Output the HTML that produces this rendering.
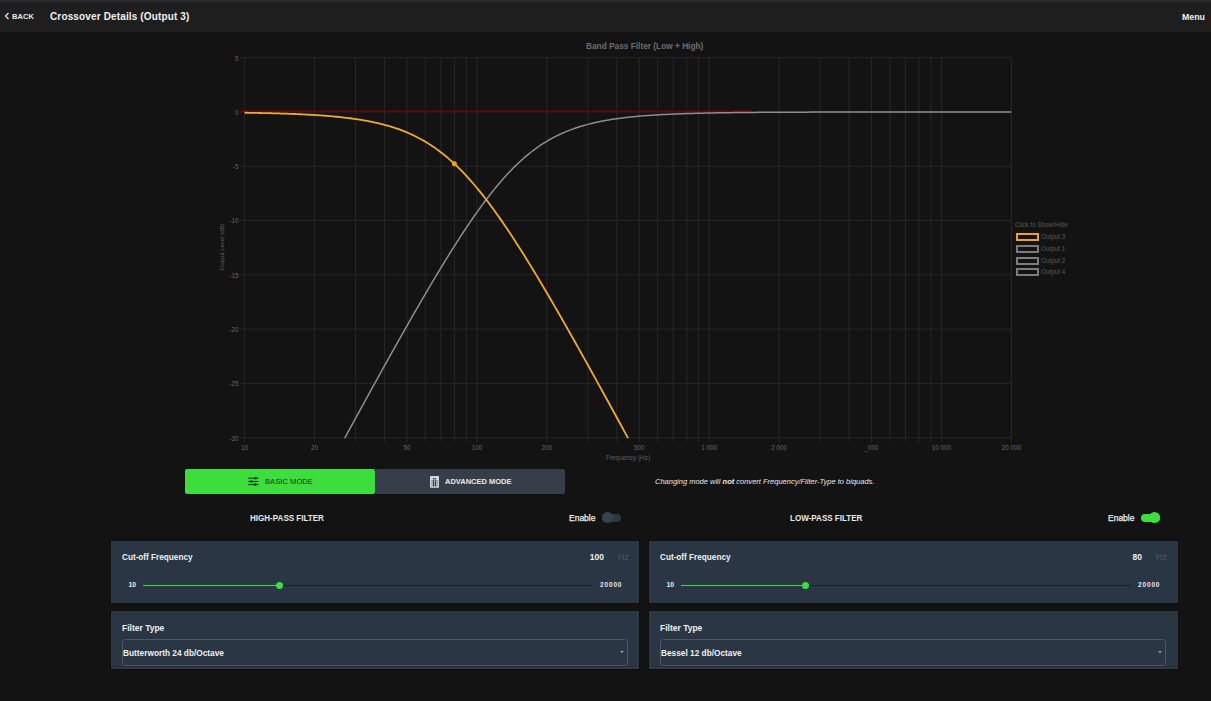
<!DOCTYPE html>
<html><head><meta charset="utf-8">
<style>
*{margin:0;padding:0;box-sizing:border-box}
html,body{width:1211px;height:701px;overflow:hidden;background:#131313;font-family:"Liberation Sans",sans-serif;position:relative}
.abs{position:absolute}
#topstrip{position:absolute;left:0;top:0;width:1211px;height:2px;background:#2b2b30}
#hdr{position:absolute;left:0;top:2px;width:1211px;height:30px;background:#1e1e1e}
.t{position:absolute;white-space:nowrap;line-height:1}
svg{position:absolute;left:0;top:0}
.yl{position:absolute;left:200px;width:38.5px;text-align:right;font-size:6.3px;line-height:8px;color:#676767}
.xl{position:absolute;top:443.7px;width:60px;text-align:center;font-size:6.3px;line-height:8px;color:#676767}
.card{position:absolute;background:#2a3644;box-shadow:0 0 0 1px rgba(8,11,16,0.55),inset 0 0 0 1px #2f3740}
.lg{position:absolute;left:1015.5px;width:23px;height:7.8px;border:2px solid #7c7c7c}
.lgt{position:absolute;left:1041px;font-size:6.3px;line-height:7px;color:#595959}
</style></head><body>
<div id="topstrip"></div>
<div id="hdr"></div>
<svg class="abs" style="left:4px;top:11.7px" width="6" height="8" viewBox="0 0 6 8"><path d="M4.5 1 L1.5 4 L4.5 7" fill="none" stroke="#e6e6e6" stroke-width="1.3"/></svg>
<div class="t" style="left:12px;top:13px;font-size:7.5px;font-weight:bold;color:#e8e8e8;letter-spacing:0.1px">BACK</div>
<div class="t" style="left:50px;top:11.5px;font-size:10px;font-weight:bold;color:#f0f0f0;letter-spacing:0.14px">Crossover Details (Output 3)</div>
<div class="t" style="left:1182px;top:13px;font-size:8.8px;font-weight:bold;color:#f0f0f0">Menu</div>

<div class="t" style="left:586px;top:41.8px;font-size:8.3px;font-weight:bold;color:#6e6e6e">Band Pass Filter (Low + High)</div>
<svg width="1211" height="470" viewBox="0 0 1211 470">
<line x1="244.60" y1="57.70" x2="244.60" y2="442" stroke="#272727" stroke-width="1"/>
<line x1="314.53" y1="57.70" x2="314.53" y2="442" stroke="#272727" stroke-width="1"/>
<line x1="355.44" y1="57.70" x2="355.44" y2="442" stroke="#272727" stroke-width="1"/>
<line x1="384.46" y1="57.70" x2="384.46" y2="442" stroke="#272727" stroke-width="1"/>
<line x1="406.97" y1="57.70" x2="406.97" y2="442" stroke="#272727" stroke-width="1"/>
<line x1="425.36" y1="57.70" x2="425.36" y2="442" stroke="#272727" stroke-width="1"/>
<line x1="440.92" y1="57.70" x2="440.92" y2="442" stroke="#272727" stroke-width="1"/>
<line x1="454.39" y1="57.70" x2="454.39" y2="442" stroke="#272727" stroke-width="1"/>
<line x1="466.27" y1="57.70" x2="466.27" y2="442" stroke="#272727" stroke-width="1"/>
<line x1="476.90" y1="57.70" x2="476.90" y2="442" stroke="#272727" stroke-width="1"/>
<line x1="546.83" y1="57.70" x2="546.83" y2="442" stroke="#272727" stroke-width="1"/>
<line x1="587.74" y1="57.70" x2="587.74" y2="442" stroke="#272727" stroke-width="1"/>
<line x1="616.76" y1="57.70" x2="616.76" y2="442" stroke="#272727" stroke-width="1"/>
<line x1="639.27" y1="57.70" x2="639.27" y2="442" stroke="#272727" stroke-width="1"/>
<line x1="657.66" y1="57.70" x2="657.66" y2="442" stroke="#272727" stroke-width="1"/>
<line x1="673.22" y1="57.70" x2="673.22" y2="442" stroke="#272727" stroke-width="1"/>
<line x1="686.69" y1="57.70" x2="686.69" y2="442" stroke="#272727" stroke-width="1"/>
<line x1="698.57" y1="57.70" x2="698.57" y2="442" stroke="#272727" stroke-width="1"/>
<line x1="709.20" y1="57.70" x2="709.20" y2="442" stroke="#272727" stroke-width="1"/>
<line x1="779.13" y1="57.70" x2="779.13" y2="442" stroke="#272727" stroke-width="1"/>
<line x1="820.04" y1="57.70" x2="820.04" y2="442" stroke="#272727" stroke-width="1"/>
<line x1="849.06" y1="57.70" x2="849.06" y2="442" stroke="#272727" stroke-width="1"/>
<line x1="871.57" y1="57.70" x2="871.57" y2="442" stroke="#272727" stroke-width="1"/>
<line x1="889.96" y1="57.70" x2="889.96" y2="442" stroke="#272727" stroke-width="1"/>
<line x1="905.52" y1="57.70" x2="905.52" y2="442" stroke="#272727" stroke-width="1"/>
<line x1="918.99" y1="57.70" x2="918.99" y2="442" stroke="#272727" stroke-width="1"/>
<line x1="930.87" y1="57.70" x2="930.87" y2="442" stroke="#272727" stroke-width="1"/>
<line x1="941.50" y1="57.70" x2="941.50" y2="442" stroke="#272727" stroke-width="1"/>
<line x1="1011.43" y1="57.70" x2="1011.43" y2="442" stroke="#272727" stroke-width="1"/>
<line x1="240" y1="57.70" x2="1011.8" y2="57.70" stroke="#272727" stroke-width="1"/>
<line x1="240" y1="111.99" x2="1011.8" y2="111.99" stroke="#272727" stroke-width="1"/>
<line x1="240" y1="166.27" x2="1011.8" y2="166.27" stroke="#272727" stroke-width="1"/>
<line x1="240" y1="220.56" x2="1011.8" y2="220.56" stroke="#272727" stroke-width="1"/>
<line x1="240" y1="274.84" x2="1011.8" y2="274.84" stroke="#272727" stroke-width="1"/>
<line x1="240" y1="329.13" x2="1011.8" y2="329.13" stroke="#272727" stroke-width="1"/>
<line x1="240" y1="383.41" x2="1011.8" y2="383.41" stroke="#272727" stroke-width="1"/>
<line x1="240" y1="437.70" x2="1011.8" y2="437.70" stroke="#272727" stroke-width="1"/>
<line x1="240" y1="111.1" x2="752" y2="111.1" stroke="#620606" stroke-width="1.7"/>
<defs><clipPath id="cp"><rect x="240" y="50" width="772" height="388.3"/></clipPath></defs>
<g clip-path="url(#cp)"><path d="M244.60,623.12 L246.52,619.56 L248.43,616.01 L250.35,612.45 L252.27,608.89 L254.19,605.33 L256.10,601.77 L258.02,598.22 L259.94,594.66 L261.85,591.10 L263.77,587.55 L265.69,583.99 L267.60,580.44 L269.52,576.88 L271.44,573.33 L273.36,569.78 L275.27,566.22 L277.19,562.67 L279.11,559.12 L281.02,555.57 L282.94,552.01 L284.86,548.46 L286.78,544.91 L288.69,541.37 L290.61,537.82 L292.53,534.27 L294.44,530.72 L296.36,527.17 L298.28,523.63 L300.20,520.08 L302.11,516.54 L304.03,513.00 L305.95,509.45 L307.86,505.91 L309.78,502.37 L311.70,498.83 L313.61,495.30 L315.53,491.76 L317.45,488.22 L319.37,484.69 L321.28,481.15 L323.20,477.62 L325.12,474.09 L327.03,470.56 L328.95,467.03 L330.87,463.51 L332.79,459.98 L334.70,456.46 L336.62,452.94 L338.54,449.42 L340.45,445.90 L342.37,442.38 L344.29,438.87 L346.20,435.35 L348.12,431.84 L350.04,428.34 L351.96,424.83 L353.87,421.33 L355.79,417.83 L357.71,414.33 L359.62,410.84 L361.54,407.34 L363.46,403.85 L365.38,400.37 L367.29,396.89 L369.21,393.41 L371.13,389.93 L373.04,386.46 L374.96,382.99 L376.88,379.52 L378.80,376.06 L380.71,372.61 L382.63,369.16 L384.55,365.71 L386.46,362.27 L388.38,358.83 L390.30,355.40 L392.21,351.98 L394.13,348.56 L396.05,345.14 L397.97,341.73 L399.88,338.33 L401.80,334.94 L403.72,331.55 L405.63,328.17 L407.55,324.80 L409.47,321.44 L411.39,318.09 L413.30,314.74 L415.22,311.40 L417.14,308.08 L419.05,304.76 L420.97,301.45 L422.89,298.16 L424.80,294.87 L426.72,291.60 L428.64,288.34 L430.56,285.10 L432.47,281.86 L434.39,278.64 L436.31,275.44 L438.22,272.25 L440.14,269.08 L442.06,265.92 L443.98,262.78 L445.89,259.66 L447.81,256.56 L449.73,253.48 L451.64,250.41 L453.56,247.37 L455.48,244.35 L457.40,241.35 L459.31,238.38 L461.23,235.43 L463.15,232.50 L465.06,229.61 L466.98,226.74 L468.90,223.89 L470.81,221.08 L472.73,218.29 L474.65,215.54 L476.57,212.82 L478.48,210.13 L480.40,207.47 L482.32,204.85 L484.23,202.27 L486.15,199.72 L488.07,197.21 L489.99,194.73 L491.90,192.30 L493.82,189.90 L495.74,187.55 L497.65,185.24 L499.57,182.97 L501.49,180.74 L503.40,178.56 L505.32,176.42 L507.24,174.33 L509.16,172.28 L511.07,170.27 L512.99,168.31 L514.91,166.40 L516.82,164.54 L518.74,162.72 L520.66,160.94 L522.58,159.22 L524.49,157.54 L526.41,155.90 L528.33,154.32 L530.24,152.77 L532.16,151.28 L534.08,149.82 L536.00,148.42 L537.91,147.05 L539.83,145.73 L541.75,144.45 L543.66,143.22 L545.58,142.02 L547.50,140.87 L549.41,139.76 L551.33,138.68 L553.25,137.64 L555.17,136.64 L557.08,135.67 L559.00,134.75 L560.92,133.85 L562.83,132.99 L564.75,132.16 L566.67,131.36 L568.59,130.59 L570.50,129.85 L572.42,129.14 L574.34,128.46 L576.25,127.80 L578.17,127.17 L580.09,126.57 L582.00,125.98 L583.92,125.42 L585.84,124.89 L587.76,124.37 L589.67,123.88 L591.59,123.41 L593.51,122.95 L595.42,122.51 L597.34,122.09 L599.26,121.69 L601.18,121.31 L603.09,120.93 L605.01,120.58 L606.93,120.24 L608.84,119.91 L610.76,119.60 L612.68,119.30 L614.60,119.01 L616.51,118.73 L618.43,118.46 L620.35,118.21 L622.26,117.96 L624.18,117.73 L626.10,117.50 L628.01,117.29 L629.93,117.08 L631.85,116.88 L633.77,116.69 L635.68,116.51 L637.60,116.33 L639.52,116.16 L641.43,116.00 L643.35,115.84 L645.27,115.69 L647.19,115.55 L649.10,115.41 L651.02,115.28 L652.94,115.15 L654.85,115.03 L656.77,114.91 L658.69,114.80 L660.60,114.69 L662.52,114.59 L664.44,114.49 L666.36,114.39 L668.27,114.30 L670.19,114.21 L672.11,114.13 L674.02,114.04 L675.94,113.96 L677.86,113.89 L679.78,113.82 L681.69,113.75 L683.61,113.68 L685.53,113.62 L687.44,113.55 L689.36,113.49 L691.28,113.44 L693.20,113.38 L695.11,113.33 L697.03,113.28 L698.95,113.23 L700.86,113.18 L702.78,113.14 L704.70,113.09 L706.61,113.05 L708.53,113.01 L710.45,112.97 L712.37,112.93 L714.28,112.90 L716.20,112.86 L718.12,112.83 L720.03,112.80 L721.95,112.77 L723.87,112.74 L725.79,112.71 L727.70,112.68 L729.62,112.66 L731.54,112.63 L733.45,112.61 L735.37,112.58 L737.29,112.56 L739.20,112.54 L741.12,112.52 L743.04,112.50 L744.96,112.48 L746.87,112.46 L748.79,112.44 L750.71,112.43 L752.62,112.41 L754.54,112.39 L756.46,112.38 L758.38,112.36 L760.29,112.35 L762.21,112.34 L764.13,112.32 L766.04,112.31 L767.96,112.30 L769.88,112.29 L771.80,112.28 L773.71,112.26 L775.63,112.25 L777.55,112.24 L779.46,112.23 L781.38,112.22 L783.30,112.22 L785.21,112.21 L787.13,112.20 L789.05,112.19 L790.97,112.18 L792.88,112.18 L794.80,112.17 L796.72,112.16 L798.63,112.16 L800.55,112.15 L802.47,112.14 L804.39,112.14 L806.30,112.13 L808.22,112.13 L810.14,112.12 L812.05,112.12 L813.97,112.11 L815.89,112.11 L817.80,112.10 L819.72,112.10 L821.64,112.09 L823.56,112.09 L825.47,112.09 L827.39,112.08 L829.31,112.08 L831.22,112.07 L833.14,112.07 L835.06,112.07 L836.98,112.06 L838.89,112.06 L840.81,112.06 L842.73,112.06 L844.64,112.05 L846.56,112.05 L848.48,112.05 L850.40,112.05 L852.31,112.04 L854.23,112.04 L856.15,112.04 L858.06,112.04 L859.98,112.04 L861.90,112.03 L863.81,112.03 L865.73,112.03 L867.65,112.03 L869.57,112.03 L871.48,112.03 L873.40,112.02 L875.32,112.02 L877.23,112.02 L879.15,112.02 L881.07,112.02 L882.99,112.02 L884.90,112.02 L886.82,112.02 L888.74,112.01 L890.65,112.01 L892.57,112.01 L894.49,112.01 L896.40,112.01 L898.32,112.01 L900.24,112.01 L902.16,112.01 L904.07,112.01 L905.99,112.01 L907.91,112.01 L909.82,112.00 L911.74,112.00 L913.66,112.00 L915.58,112.00 L917.49,112.00 L919.41,112.00 L921.33,112.00 L923.24,112.00 L925.16,112.00 L927.08,112.00 L929.00,112.00 L930.91,112.00 L932.83,112.00 L934.75,112.00 L936.66,112.00 L938.58,112.00 L940.50,112.00 L942.41,112.00 L944.33,112.00 L946.25,111.99 L948.17,111.99 L950.08,111.99 L952.00,111.99 L953.92,111.99 L955.83,111.99 L957.75,111.99 L959.67,111.99 L961.59,111.99 L963.50,111.99 L965.42,111.99 L967.34,111.99 L969.25,111.99 L971.17,111.99 L973.09,111.99 L975.00,111.99 L976.92,111.99 L978.84,111.99 L980.76,111.99 L982.67,111.99 L984.59,111.99 L986.51,111.99 L988.42,111.99 L990.34,111.99 L992.26,111.99 L994.18,111.99 L996.09,111.99 L998.01,111.99 L999.93,111.99 L1001.84,111.99 L1003.76,111.99 L1005.68,111.99 L1007.60,111.99 L1009.51,111.99 L1011.43,111.99" fill="none" stroke="#8e8e8e" stroke-width="1.5"/>
<path d="M244.60,112.73 L246.52,112.76 L248.43,112.79 L250.35,112.82 L252.27,112.85 L254.19,112.88 L256.10,112.92 L258.02,112.96 L259.94,112.99 L261.85,113.03 L263.77,113.08 L265.69,113.12 L267.60,113.16 L269.52,113.21 L271.44,113.26 L273.36,113.31 L275.27,113.36 L277.19,113.41 L279.11,113.47 L281.02,113.53 L282.94,113.59 L284.86,113.65 L286.78,113.71 L288.69,113.78 L290.61,113.85 L292.53,113.93 L294.44,114.00 L296.36,114.08 L298.28,114.17 L300.20,114.25 L302.11,114.34 L304.03,114.44 L305.95,114.53 L307.86,114.63 L309.78,114.74 L311.70,114.85 L313.61,114.96 L315.53,115.08 L317.45,115.20 L319.37,115.33 L321.28,115.46 L323.20,115.60 L325.12,115.75 L327.03,115.90 L328.95,116.05 L330.87,116.22 L332.79,116.39 L334.70,116.56 L336.62,116.75 L338.54,116.94 L340.45,117.14 L342.37,117.34 L344.29,117.56 L346.20,117.78 L348.12,118.02 L350.04,118.26 L351.96,118.51 L353.87,118.78 L355.79,119.05 L357.71,119.34 L359.62,119.64 L361.54,119.95 L363.46,120.27 L365.38,120.61 L367.29,120.96 L369.21,121.32 L371.13,121.70 L373.04,122.10 L374.96,122.51 L376.88,122.94 L378.80,123.38 L380.71,123.85 L382.63,124.33 L384.55,124.83 L386.46,125.35 L388.38,125.90 L390.30,126.47 L392.21,127.05 L394.13,127.67 L396.05,128.30 L397.97,128.97 L399.88,129.66 L401.80,130.37 L403.72,131.12 L405.63,131.89 L407.55,132.69 L409.47,133.52 L411.39,134.39 L413.30,135.28 L415.22,136.21 L417.14,137.18 L419.05,138.18 L420.97,139.21 L422.89,140.28 L424.80,141.39 L426.72,142.54 L428.64,143.73 L430.56,144.96 L432.47,146.22 L434.39,147.53 L436.31,148.88 L438.22,150.28 L440.14,151.72 L442.06,153.20 L443.98,154.72 L445.89,156.29 L447.81,157.91 L449.73,159.56 L451.64,161.27 L453.56,163.02 L455.48,164.81 L457.40,166.65 L459.31,168.54 L461.23,170.47 L463.15,172.45 L465.06,174.47 L466.98,176.53 L468.90,178.64 L470.81,180.79 L472.73,182.99 L474.65,185.23 L476.57,187.51 L478.48,189.83 L480.40,192.19 L482.32,194.59 L484.23,197.04 L486.15,199.52 L488.07,202.03 L489.99,204.59 L491.90,207.18 L493.82,209.80 L495.74,212.46 L497.65,215.15 L499.57,217.88 L501.49,220.63 L503.40,223.42 L505.32,226.23 L507.24,229.08 L509.16,231.95 L511.07,234.85 L512.99,237.77 L514.91,240.72 L516.82,243.70 L518.74,246.70 L520.66,249.72 L522.58,252.76 L524.49,255.82 L526.41,258.91 L528.33,262.01 L530.24,265.13 L532.16,268.27 L534.08,271.43 L536.00,274.61 L537.91,277.80 L539.83,281.00 L541.75,284.22 L543.66,287.46 L545.58,290.71 L547.50,293.97 L549.41,297.25 L551.33,300.54 L553.25,303.83 L555.17,307.15 L557.08,310.47 L559.00,313.80 L560.92,317.14 L562.83,320.49 L564.75,323.85 L566.67,327.22 L568.59,330.60 L570.50,333.99 L572.42,337.38 L574.34,340.78 L576.25,344.19 L578.17,347.61 L580.09,351.03 L582.00,354.46 L583.92,357.89 L585.84,361.33 L587.76,364.78 L589.67,368.23 L591.59,371.69 L593.51,375.15 L595.42,378.61 L597.34,382.08 L599.26,385.56 L601.18,389.04 L603.09,392.52 L605.01,396.01 L606.93,399.50 L608.84,403.00 L610.76,406.50 L612.68,410.00 L614.60,413.50 L616.51,417.01 L618.43,420.52 L620.35,424.03 L622.26,427.55 L624.18,431.07 L626.10,434.59 L628.01,438.11 L629.93,441.64 L631.85,445.17 L633.77,448.70 L635.68,452.23 L637.60,455.77 L639.52,459.30 L641.43,462.84 L643.35,466.38 L645.27,469.92 L647.19,473.46 L649.10,477.01 L651.02,480.56 L652.94,484.10 L654.85,487.65 L656.77,491.20 L658.69,494.75 L660.60,498.31 L662.52,501.86 L664.44,505.42 L666.36,508.97 L668.27,512.53 L670.19,516.09 L672.11,519.65 L674.02,523.21 L675.94,526.77 L677.86,530.33 L679.78,533.89 L681.69,537.46 L683.61,541.02 L685.53,544.59 L687.44,548.15 L689.36,551.72 L691.28,555.29 L693.20,558.85 L695.11,562.42 L697.03,565.99 L698.95,569.56 L700.86,573.13 L702.78,576.70 L704.70,580.27 L706.61,583.84 L708.53,587.42 L710.45,590.99 L712.37,594.56 L714.28,598.13 L716.20,601.71 L718.12,605.28 L720.03,608.86 L721.95,612.43 L723.87,616.01 L725.79,619.58 L727.70,623.16 L729.62,626.73 L731.54,630.31 L733.45,633.89 L735.37,637.46 L737.29,641.04 L739.20,644.62 L741.12,648.20 L743.04,651.77 L744.96,655.35 L746.87,658.93 L748.79,662.51 L750.71,666.09 L752.62,669.67 L754.54,673.25 L756.46,676.83 L758.38,680.41 L760.29,683.99 L762.21,687.57 L764.13,691.15 L766.04,694.73 L767.96,698.31 L769.88,701.89 L771.80,705.47 L773.71,709.05 L775.63,712.63 L777.55,716.21 L779.46,719.79 L781.38,723.37 L783.30,726.95 L785.21,730.53 L787.13,734.12 L789.05,737.70 L790.97,741.28 L792.88,744.86 L794.80,748.44 L796.72,752.02 L798.63,755.61 L800.55,759.19 L802.47,762.77 L804.39,766.35 L806.30,769.94 L808.22,773.52 L810.14,777.10 L812.05,780.68 L813.97,784.27 L815.89,787.85 L817.80,791.43 L819.72,795.01 L821.64,798.60 L823.56,802.18 L825.47,805.76 L827.39,809.34 L829.31,812.93 L831.22,816.51 L833.14,820.09 L835.06,823.68 L836.98,827.26 L838.89,830.84 L840.81,834.43 L842.73,838.01 L844.64,841.59 L846.56,845.17 L848.48,848.76 L850.40,852.34 L852.31,855.92 L854.23,859.51 L856.15,863.09 L858.06,866.67 L859.98,870.26 L861.90,873.84 L863.81,877.42 L865.73,881.01 L867.65,884.59 L869.57,888.18 L871.48,891.76 L873.40,895.34 L875.32,898.93 L877.23,902.51 L879.15,906.09 L881.07,909.68 L882.99,913.26 L884.90,916.84 L886.82,920.43 L888.74,924.01 L890.65,927.59 L892.57,931.18 L894.49,934.76 L896.40,938.35 L898.32,941.93 L900.24,945.51 L902.16,949.10 L904.07,952.68 L905.99,956.26 L907.91,959.85 L909.82,963.43 L911.74,967.02 L913.66,970.60 L915.58,974.18 L917.49,977.77 L919.41,981.35 L921.33,984.93 L923.24,988.52 L925.16,992.10 L927.08,995.69 L929.00,999.27 L930.91,1002.85 L932.83,1006.44 L934.75,1010.02 L936.66,1013.61 L938.58,1017.19 L940.50,1020.77 L942.41,1024.36 L944.33,1027.94 L946.25,1031.52 L948.17,1035.11 L950.08,1038.69 L952.00,1042.28 L953.92,1045.86 L955.83,1049.44 L957.75,1053.03 L959.67,1056.61 L961.59,1060.20 L963.50,1063.78 L965.42,1067.36 L967.34,1070.95 L969.25,1074.53 L971.17,1078.11 L973.09,1081.70 L975.00,1085.28 L976.92,1088.87 L978.84,1092.45 L980.76,1096.03 L982.67,1099.62 L984.59,1103.20 L986.51,1106.79 L988.42,1110.37 L990.34,1113.95 L992.26,1117.54 L994.18,1121.12 L996.09,1124.71 L998.01,1128.29 L999.93,1131.87 L1001.84,1135.46 L1003.76,1139.04 L1005.68,1142.63 L1007.60,1146.21 L1009.51,1149.79 L1011.43,1153.38" fill="none" stroke="#f0aa32" stroke-width="1.8"/></g>
<circle cx="454.39" cy="163.79" r="2.5" fill="#f2a30e"/>
</svg>
<div class="yl" style="top:54.5px">5</div><div class="yl" style="top:108.8px">0</div><div class="yl" style="top:163.1px">-5</div><div class="yl" style="top:217.4px">-10</div><div class="yl" style="top:271.6px">-15</div><div class="yl" style="top:325.9px">-20</div><div class="yl" style="top:380.2px">-25</div><div class="yl" style="top:434.5px">-30</div>
<div class="xl" style="left:214.6px">10</div><div class="xl" style="left:284.5px">20</div><div class="xl" style="left:377.0px">50</div><div class="xl" style="left:446.9px">100</div><div class="xl" style="left:516.8px">200</div><div class="xl" style="left:609.3px">500</div><div class="xl" style="left:679.2px">1 000</div><div class="xl" style="left:749.1px">2 000</div><div class="xl" style="left:841.6px">_000</div><div class="xl" style="left:911.5px">10 000</div><div class="xl" style="left:981.4px">20 000</div>
<div class="t" style="left:606px;top:455px;font-size:6.4px;color:#606060">Frequency (Hz)</div>
<div class="t" style="left:197px;top:244px;width:50px;text-align:center;font-size:6px;color:#606060;transform:rotate(-90deg)">Output Level (dB)</div>

<div class="t" style="left:1015px;top:222px;font-size:6.3px;color:#595959">Click to Show/Hide</div>
<div class="lg" style="top:233px;border-color:#eea42c"></div><div class="lgt" style="top:233px">Output 3</div>
<div class="lg" style="top:245px"></div><div class="lgt" style="top:245px">Output 1</div>
<div class="lg" style="top:257px"></div><div class="lgt" style="top:257px">Output 2</div>
<div class="lg" style="top:268px"></div><div class="lgt" style="top:268px">Output 4</div>

<!-- mode buttons -->
<div class="abs" style="left:375px;top:469px;width:190px;height:25px;background:#363e4a;border-radius:2px"></div>
<div class="abs" style="left:185px;top:469px;width:190px;height:25px;background:#3ddd3d;border-radius:2px"></div>
<svg class="abs" style="left:247px;top:476px" width="13" height="11" viewBox="0 0 13 11">
<g stroke="#0b3f0b" stroke-width="1.1" fill="#0b3f0b"><line x1="1.2" y1="2.2" x2="11.4" y2="2.2"/><line x1="1.2" y1="5.5" x2="11.4" y2="5.5"/><line x1="1.2" y1="8.6" x2="11.4" y2="8.6"/></g>
<g fill="#0b3f0b"><circle cx="8.4" cy="2.2" r="1.3"/><circle cx="4.3" cy="5.5" r="1.3"/><circle cx="8.4" cy="8.6" r="1.3"/></g></svg>
<div class="t" style="left:265px;top:478px;font-size:7.5px;color:#0a400a;letter-spacing:0.08px">BASIC MODE</div>
<svg class="abs" style="left:430px;top:475.5px" width="9.2" height="12" viewBox="0 0 9.2 12">
<rect x="0" y="0" width="9.2" height="11.7" rx="1" fill="#d3d7dd"/>
<rect x="2.8" y="2.2" width="3.4" height="1.2" fill="#3a4250"/>
<g fill="#2c333d"><rect x="3.1" y="4.4" width="0.9" height="6.2"/><rect x="5.1" y="4.4" width="0.9" height="6.2"/>
<rect x="1.2" y="4.6" width="7" height="0.6"/><rect x="1.2" y="6.7" width="7" height="0.6"/><rect x="1.2" y="8.8" width="7" height="0.6"/></g></svg>
<div class="t" style="left:445px;top:478px;font-size:7.5px;font-weight:bold;color:#e8e8e8">ADVANCED MODE</div>
<div class="t" style="left:655px;top:478px;font-size:7.5px;font-style:italic;color:#e8e8e8">Changing mode will <b>not</b> convert Frequency/Filter-Type to biquads.</div>

<div class="t" style="left:250px;top:513.6px;font-size:8.8px;font-weight:bold;color:#e8e8e8;transform:scaleX(0.915);transform-origin:0 0">HIGH-PASS FILTER</div>
<div class="t" style="left:569px;top:514px;font-size:8.5px;color:#ececec;-webkit-text-stroke:0.25px #ececec">Enable</div>
<div class="abs" style="left:602px;top:514px;width:19px;height:8px;border-radius:4px;background:#2f3743"></div>
<div class="abs" style="left:602px;top:512px;width:11px;height:11px;border-radius:50%;background:#38414e"></div>

<div class="t" style="left:790px;top:513.6px;font-size:8.8px;font-weight:bold;color:#e8e8e8;transform:scaleX(0.915);transform-origin:0 0">LOW-PASS FILTER</div>
<div class="t" style="left:1108px;top:514px;font-size:8.5px;color:#ececec;-webkit-text-stroke:0.25px #ececec">Enable</div>
<div class="abs" style="left:1141px;top:514px;width:19px;height:8px;border-radius:4px;background:#3ddd3d"></div>
<div class="abs" style="left:1149px;top:512px;width:11px;height:11px;border-radius:50%;background:#3ddd3d"></div>

<div class="card" style="left:111px;top:541px;width:528px;height:62px"></div>
<div class="t" style="left:122px;top:554px;font-size:8.2px;font-weight:bold;color:#eef0f2">Cut-off Frequency</div>
<div class="t" style="left:504px;top:553px;width:100px;text-align:right;font-size:8.5px;font-weight:bold;color:#eef0f2">100</div>
<div class="t" style="left:618px;top:553px;font-size:9px;color:#4c5664">Hz</div>
<div class="t" style="left:128.6px;top:582.2px;font-size:6.8px;font-weight:bold;color:#eceef0">10</div>
<div class="abs" style="left:143px;top:585px;width:449px;height:1px;background:#1b2129"></div>
<div class="abs" style="left:143px;top:585px;width:136px;height:1px;background:#3ddd3d"></div>
<div class="abs" style="left:275.5px;top:581.5px;width:7px;height:7px;border-radius:50%;background:#3ddd3d"></div>
<div class="t" style="left:600px;top:581.5px;font-size:6.5px;font-weight:bold;color:#e8e8e8;letter-spacing:0.85px">20000</div>
<div class="card" style="left:111px;top:611px;width:528px;height:58px"></div>
<div class="t" style="left:122px;top:623.7px;font-size:8.5px;font-weight:bold;color:#eef0f2">Filter Type</div>
<div class="abs" style="left:122px;top:639px;width:506px;height:27px;border:1px solid #4d5765;border-radius:3.5px"></div>
<div class="abs" style="left:112px;top:666px;width:526px;height:1px;background:#252d37"></div>
<div class="abs" style="left:112px;top:667px;width:526px;height:2px;background:#343941"></div>
<div class="t" style="left:123px;top:648.6px;font-size:8.3px;font-weight:bold;color:#eef0f2">Butterworth 24 db/Octave</div>
<div class="abs" style="left:620px;top:651px;width:0;height:0;border-left:2.5px solid transparent;border-right:2.5px solid transparent;border-top:2.5px solid #9aa2ac"></div>
<div class="card" style="left:649px;top:541px;width:529px;height:62px"></div>
<div class="t" style="left:660px;top:554px;font-size:8.2px;font-weight:bold;color:#eef0f2">Cut-off Frequency</div>
<div class="t" style="left:1042px;top:553px;width:100px;text-align:right;font-size:8.5px;font-weight:bold;color:#eef0f2">80</div>
<div class="t" style="left:1156px;top:553px;font-size:9px;color:#4c5664">Hz</div>
<div class="t" style="left:666.6px;top:582.2px;font-size:6.8px;font-weight:bold;color:#eceef0">10</div>
<div class="abs" style="left:681px;top:585px;width:450px;height:1px;background:#1b2129"></div>
<div class="abs" style="left:681px;top:585px;width:124px;height:1px;background:#3ddd3d"></div>
<div class="abs" style="left:801.5px;top:581.5px;width:7px;height:7px;border-radius:50%;background:#3ddd3d"></div>
<div class="t" style="left:1138px;top:581.5px;font-size:6.5px;font-weight:bold;color:#e8e8e8;letter-spacing:0.85px">20000</div>
<div class="card" style="left:649px;top:611px;width:529px;height:58px"></div>
<div class="t" style="left:660px;top:623.7px;font-size:8.5px;font-weight:bold;color:#eef0f2">Filter Type</div>
<div class="abs" style="left:660px;top:639px;width:506px;height:27px;border:1px solid #4d5765;border-radius:3.5px"></div>
<div class="abs" style="left:650px;top:666px;width:527px;height:1px;background:#252d37"></div>
<div class="abs" style="left:650px;top:667px;width:527px;height:2px;background:#343941"></div>
<div class="t" style="left:661px;top:648.6px;font-size:8.3px;font-weight:bold;color:#eef0f2">Bessel 12 db/Octave</div>
<div class="abs" style="left:1158px;top:651px;width:0;height:0;border-left:2.5px solid transparent;border-right:2.5px solid transparent;border-top:2.5px solid #9aa2ac"></div>
</body></html>
